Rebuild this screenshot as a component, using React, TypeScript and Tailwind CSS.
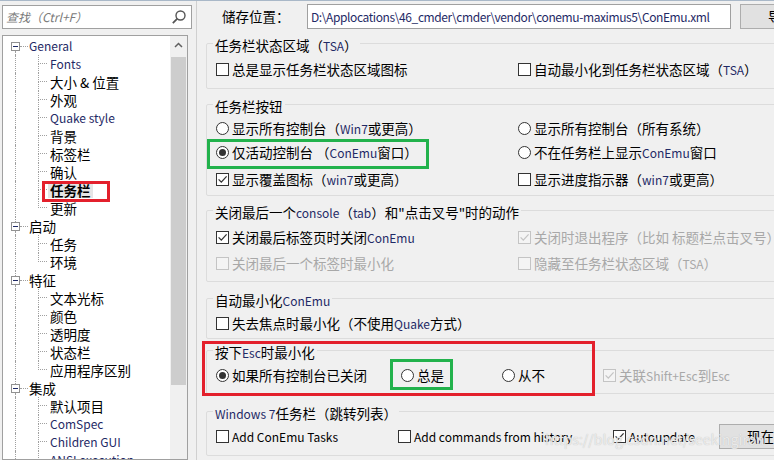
import React from 'react';

type TreeItem = { t: string; root?: boolean; last?: boolean; sel?: boolean; en?: boolean };

const tree: TreeItem[] = [
  { t: 'General', root: true, en: true },
  { t: 'Fonts', en: true },
  { t: '大小 & 位置' },
  { t: '外观' },
  { t: 'Quake style', en: true },
  { t: '背景' },
  { t: '标签栏' },
  { t: '确认' },
  { t: '任务栏', sel: true },
  { t: '更新', last: true },
  { t: '启动', root: true },
  { t: '任务' },
  { t: '环境', last: true },
  { t: '特征', root: true },
  { t: '文本光标' },
  { t: '颜色' },
  { t: '透明度' },
  { t: '状态栏' },
  { t: '应用程序区别', last: true },
  { t: '集成', root: true },
  { t: '默认项目' },
  { t: 'ComSpec', en: true },
  { t: 'Children GUI', en: true },
  { t: 'ANSI execution', en: true },
];

const dot = 'border-dotted border-[#a0a0a0]';

// latin runs inside chinese labels: smaller, with the navy-ish cleartype tint
function Mixed({ s, tint = true }: { s: string; tint?: boolean }) {
  const parts = s.split(/([A-Za-z0-9+]+(?:[ +][A-Za-z0-9+]+)*)/);
  return (
    <>
      {parts.map((p, i) =>
        i % 2 === 1 ? (
          <span key={i} className={`text-[12px] leading-none ${tint ? 'text-[#1f2a66]' : ''}`}>{p}</span>
        ) : (
          <React.Fragment key={i}>{p}</React.Fragment>
        )
      )}
    </>
  );
}

function TreeRow({ item, first }: { item: TreeItem; first: boolean }) {
  if (item.root) {
    return (
      <div className="flex h-[18px]">
        <div className="w-[8px] shrink-0" />
        <div className="w-[9px] shrink-0 flex flex-col items-center">
          <div className={`h-[5px] w-0 ${first ? '' : `border-l ${dot}`}`} />
          <div className="w-[9px] h-[9px] border border-[#919191] bg-white flex items-center justify-center">
            <div className="w-[5px] h-px bg-[#1f2a66]" />
          </div>
          <div className={`flex-1 w-0 border-l ${dot}`} />
        </div>
        <div className="w-[8px] shrink-0 flex items-center">
          <div className={`w-full border-t ${dot}`} />
        </div>
        <span className={`ml-[1px] leading-[18px] ${item.en ? 'text-[12px] text-[#1f2a66]' : 'text-black'}`}>{item.t}</span>
      </div>
    );
  }
  return (
    <div className="flex h-[18px]">
      <div className="w-[12px] shrink-0" />
      <div className={`w-[23px] shrink-0 border-l ${dot}`} />
      <div className="w-[9px] shrink-0 flex flex-col">
        <div className={`h-[9px] border-l border-b ${dot}`} />
        {!item.last && <div className={`flex-1 border-l ${dot}`} />}
      </div>
      {item.sel ? (
        <span className="ml-[1px] px-[2px] h-[16px] mt-[1px] leading-[16px] bg-[#e5e5e5] font-bold text-black">
          {item.t}
        </span>
      ) : (
        <span className={`ml-[3px] h-[18px] leading-[18px] whitespace-nowrap ${item.en ? 'text-[12px] text-[#1f2a66]' : 'text-black'}`}>
          {item.en ? item.t : <Mixed s={item.t} tint={false} />}
        </span>
      )}
    </div>
  );
}

function Check({ on, off }: { on?: boolean; off?: boolean }) {
  return (
    <span
      className={`w-[13px] h-[13px] shrink-0 border flex items-center justify-center ${
        off ? 'border-[#c4c4c4] bg-[#f4f4f4]' : 'border-[#333333] bg-white'
      }`}
    >
      {on && (
        <svg width="11" height="11" viewBox="0 0 11 11">
          <path d="M1.6 5.4 L4.3 8.1 L9.6 2.4" fill="none" stroke={off ? '#c4c4c4' : '#333333'} strokeWidth="1.3" />
        </svg>
      )}
    </span>
  );
}

function Radio({ on }: { on?: boolean }) {
  return (
    <span className="w-[13px] h-[13px] shrink-0 rounded-full border border-[#333333] bg-white flex items-center justify-center">
      {on && <span className="w-[7px] h-[7px] rounded-full bg-[#333333]" />}
    </span>
  );
}

function Opt({
  label,
  kind = 'check',
  on,
  off,
  plain,
}: {
  label: string;
  kind?: 'check' | 'radio';
  on?: boolean;
  off?: boolean;
  plain?: boolean;
}) {
  return (
    <div className="flex items-center gap-[3px] whitespace-nowrap">
      {kind === 'radio' ? <Radio on={on} /> : <Check on={on} off={off} />}
      <span className={`${off ? 'text-[#a8a8a8]' : 'text-black'} ${plain ? 'text-[12px]' : ''}`}>
        {plain ? label : <Mixed s={label} tint={!off} />}
      </span>
    </div>
  );
}

function Group({
  title,
  className,
  children,
}: {
  title: React.ReactNode;
  className: string;
  children: React.ReactNode;
}) {
  return (
    <fieldset className={`w-[640px] shrink-0 border border-[#dcdcdc] rounded-[2px] px-[9px] ${className}`}>
      <legend className="-ml-[3px] px-[2px] pt-[4px] h-[20px] leading-[16px] whitespace-nowrap text-black">
        {title}
      </legend>
      {children}
    </fieldset>
  );
}

export default function App() {
  return (
    <div className="relative w-[774px] h-[460px] overflow-hidden bg-[#f0f0f0] border-t border-[#a9b8c8] flex text-[13.5px] font-['Noto_Sans_CJK_SC','Noto_Sans',sans-serif]">
      {/* left: search + settings tree */}
      <div className="w-[196px] shrink-0 pl-[2px] pt-[4px] flex flex-col">
        <div className="w-[190px] h-[24px] border border-[#a0a0a0] bg-white flex items-center pl-[3px] pr-[4px]">
          <span className="flex-1 italic text-[#7a7a7a] text-[12px]">查找（Ctrl+F）</span>
          <svg width="16" height="16" viewBox="0 0 16 16">
            <circle cx="9.5" cy="6.5" r="4.5" fill="none" stroke="#555" strokeWidth="1.4" />
            <path d="M6.3 9.7 L1.8 14.2" stroke="#555" strokeWidth="1.8" />
          </svg>
        </div>
        <div className="mt-[6px] w-[186px] flex-1 border border-[#a0a0a0] bg-white flex overflow-hidden">
          <div className="flex-1 pt-[1px] overflow-hidden">
            {tree.map((it, i) => (
              <TreeRow key={i} item={it} first={i === 0} />
            ))}
          </div>
          <div className="w-[17px] shrink-0 bg-[#f0f0f0] flex flex-col items-center">
            <div className="h-[17px] w-full flex items-center justify-center">
              <svg width="9" height="6" viewBox="0 0 9 6">
                <path d="M1 5 L4.5 1.5 L8 5" fill="none" stroke="#606060" strokeWidth="1.5" />
              </svg>
            </div>
            <div className="mt-[4px] w-[15px] h-[328px] bg-[#cdcdcd]" />
          </div>
        </div>
      </div>

      {/* right: taskbar settings page */}
      <div className="flex-1 border-l border-[#d0d0d0] pl-[9px] flex flex-col overflow-hidden">
        <div className="h-[32px] shrink-0 flex items-start pt-[3px] whitespace-nowrap">
          <span className="ml-[16px] w-[85px] shrink-0 leading-[25px]">储存位置：</span>
          <div className="w-[424px] h-[25px] shrink-0 border border-[#a0a0a0] bg-white px-[3px] leading-[23px] text-[12px] tracking-[-0.4px] text-[#1f2a66] overflow-hidden">
            D:\Applocations\46_cmder\cmder\vendor\conemu-maximus5\ConEmu.xml
          </div>
          <div className="ml-[9px] w-[60px] h-[25px] shrink-0 bg-[#e1e1e1] border border-[#adadad] pl-[27px] leading-[23px]">
            导出
          </div>
        </div>

        <Group title={<Mixed s="任务栏状态区域（TSA）" />} className="h-[56px]">
          <div className="grid grid-cols-[302px_1fr] h-[24px] items-center mt-[4px]">
            <Opt label="总是显示任务栏状态区域图标" />
            <Opt label="自动最小化到任务栏状态区域（TSA）" />
          </div>
        </Group>

        <Group title="任务栏按钮" className="h-[102px] mt-[5px]">
          <div className="grid grid-cols-[302px_1fr] auto-rows-[24px] items-center mt-[2px]">
            <Opt kind="radio" label="显示所有控制台（Win7或更高）" />
            <Opt kind="radio" label="显示所有控制台（所有系统）" />
            <Opt kind="radio" on label="仅活动控制台 （ConEmu窗口）" />
            <Opt kind="radio" label="不在任务栏上显示ConEmu窗口" />
          </div>
          <div className="grid grid-cols-[302px_1fr] h-[24px] items-center mt-[3px]">
            <Opt on label="显示覆盖图标（win7或更高）" />
            <Opt label="显示进度指示器（win7或更高）" />
          </div>
        </Group>

        <Group title={<Mixed s={'关闭最后一个console（tab）和"点击叉号"时的动作'} />} className="h-[82px] mt-[4px]">
          <div className="grid grid-cols-[302px_1fr] auto-rows-[24px] gap-y-[2px] items-center mt-[5px]">
            <Opt on label="关闭最后标签页时关闭ConEmu" />
            <Opt on off label="关闭时退出程序（比如 标题栏点击叉号）" />
            <Opt off label="关闭最后一个标签时最小化" />
            <Opt off label="隐藏至任务栏状态区域（TSA）" />
          </div>
        </Group>

        <Group title={<Mixed s="自动最小化ConEmu" />} className="h-[51px] mt-[6px]">
          <div className="h-[24px] flex items-center mt-[3px]">
            <Opt label="失去焦点时最小化（不使用Quake方式）" />
          </div>
        </Group>

        <Group title={<Mixed s="按下Esc时最小化" />} className="h-[54px] mt-[1px]">
          <div className="h-[24px] flex items-center mt-[3px]">
            <div className="w-[185px] shrink-0">
              <Opt kind="radio" on label="如果所有控制台已关闭" />
            </div>
            <div className="w-[101px] shrink-0">
              <Opt kind="radio" label="总是" />
            </div>
            <div className="w-[101px] shrink-0">
              <Opt kind="radio" label="从不" />
            </div>
            <Opt on off label="关联Shift+Esc到Esc" />
          </div>
        </Group>

        <Group title={<Mixed s="Windows 7任务栏（跳转列表）" />} className="h-[55px] mt-[7px]">
          <div className="h-[25px] flex items-center mt-[3px]">
            <div className="w-[182px] shrink-0">
              <Opt plain label="Add ConEmu Tasks" />
            </div>
            <div className="w-[215px] shrink-0">
              <Opt plain label="Add commands from history" />
            </div>
            <div className="w-[106px] shrink-0">
              <Opt plain on label="Autoupdate" />
            </div>
            <div className="w-[80px] h-[25px] shrink-0 bg-[#e1e1e1] border border-[#adadad] pl-[27px] leading-[23px] whitespace-nowrap">
              现在更新
            </div>
          </div>
        </Group>
      </div>

      {/* screenshot annotations */}
      <div className="absolute left-[42px] top-[180px] w-[68px] h-[21px] border-[3px] border-[#e3202c]" />
      <div className="absolute left-[207px] top-[138px] w-[222px] h-[30px] border-[3px] border-[#22b24c]" />
      <div className="absolute left-[202px] top-[340px] w-[393px] h-[55px] border-[3px] border-[#e3202c]" />
      <div className="absolute left-[390px] top-[358px] w-[63px] h-[31px] border-[3px] border-[#22b24c]" />
      <span className="absolute left-[545px] top-[428px] text-[14px] text-[#f6f6f6]/80 whitespace-nowrap [text-shadow:0_0_1px_#b4b4b4]">
        https://blog.csdn.net/seekingiron
      </span>
    </div>
  );
}
